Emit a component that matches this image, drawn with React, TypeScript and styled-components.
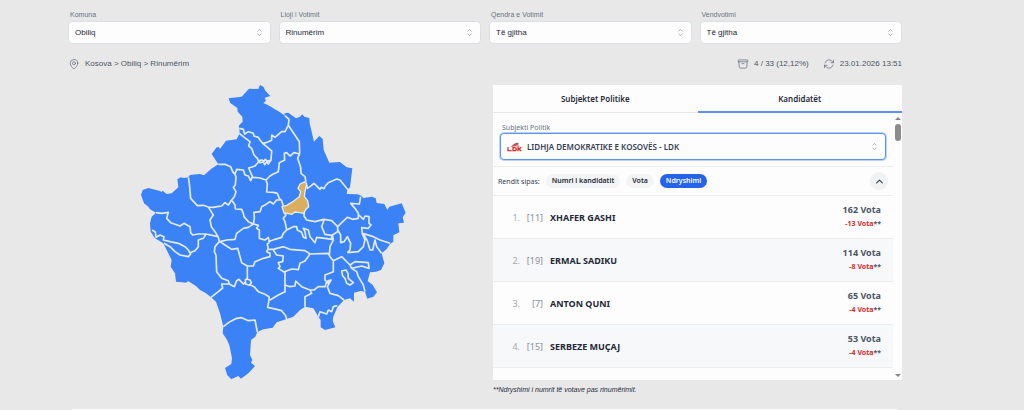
import React, { useState } from "react";
import styled, { createGlobalStyle } from "styled-components";
import {
  HiOutlineMapPin,
  HiOutlineArchiveBox,
  HiOutlineArrowPath,
  HiOutlineChevronUpDown,
  HiOutlineChevronUp,
} from "react-icons/hi2";

const GlobalStyle = createGlobalStyle`
  * { box-sizing: border-box; }
  body {
    margin: 0;
    background: #e8e8e8;
    color: #1f2937;
    font-family: "Liberation Sans", Arial, sans-serif;
    overflow-x: hidden;
  }
  button, select { font: inherit; color: inherit; }
`;

const Page = styled.main`
  padding: 10px 122px 0 68px;
`;

const Filters = styled.form`
  display: grid;
  grid-template-columns: repeat(4, 1fr);
  gap: 8px;
`;

const Field = styled.div`
  display: flex;
  flex-direction: column;
`;

const FieldLabel = styled.label`
  padding-left: 2px;
  font-size: 7px;
  line-height: 10px;
  color: #6b7280;
`;

const SelectBox = styled.div<{ $active?: boolean }>`
  display: flex;
  align-items: center;
  height: ${(p) => (p.$active ? 27 : 23)}px;
  margin-top: ${(p) => (p.$active ? 0 : 1)}px;
  padding: 0 5px 0 6px;
  background: #fdfdfd;
  border: 1px solid ${(p) => (p.$active ? "#5b93f0" : "#dcdfe3")};
  border-radius: 4px;
  box-shadow: ${(p) => (p.$active ? "0 0 0 1px #bcd3fa" : "none")};
  color: #8b929d;
`;

const Select = styled.select<{ $strong?: boolean }>`
  flex: 1;
  min-width: 0;
  padding: 0;
  border: 0;
  outline: 0;
  appearance: none;
  background: transparent;
  color: ${(p) => (p.$strong ? "#374151" : "#1f2937")};
  font-size: 8px;
  font-weight: ${(p) => (p.$strong ? 600 : 400)};
`;

const StatusBar = styled.div`
  display: flex;
  align-items: center;
  gap: 14px;
  height: 12px;
  margin: 14px 0 15px;
  font-size: 8px;
  line-height: 12px;
  color: #4b5563;
`;

const Status = styled.div<{ $grow?: boolean }>`
  display: flex;
  align-items: center;
  gap: 5px;
  flex: ${(p) => (p.$grow ? 1 : "none")};
  svg { color: #6b7280; }
`;

const Content = styled.div`
  display: grid;
  grid-template-columns: 1fr 409px;
  gap: 12px;
`;

const MapArea = styled.div`
  display: flex;
  justify-content: center;
  align-items: flex-start;
  margin-top: -5px;
`;

const Panel = styled.section`
  background: #fdfdfd;
  font-family: "Noto Sans", sans-serif;
`;

const Tabs = styled.div`
  display: grid;
  grid-template-columns: 1fr 1fr;
`;

const Tab = styled.button<{ $active: boolean }>`
  height: 28px;
  padding: 0;
  border: 0;
  border-bottom: ${(p) => (p.$active ? "2px solid #5b93f0" : "1px solid #e5e7eb")};
  background: transparent;
  font-size: 8px;
  font-weight: 600;
`;

const ScrollArea = styled.div`
  display: flex;
  height: 267px;
  overflow: hidden;
`;

const ScrollContent = styled.div`
  flex: 1;
  min-width: 0;
`;

const ScrollBar = styled.div`
  display: flex;
  flex-direction: column;
  align-items: center;
  gap: 4px;
  width: 9px;
  padding: 4px 0 3px;
`;

const Arrow = styled.span<{ $down?: boolean }>`
  border: 3px solid transparent;
  border-width: ${(p) => (p.$down ? "3px 3px 0" : "0 3px 3px")};
  border-${(p) => (p.$down ? "top" : "bottom")}-color: #858585;
  margin-top: ${(p) => (p.$down ? "auto" : "0")};
`;

const Thumb = styled.span`
  width: 6px;
  height: 17px;
  border-radius: 3px;
  background: #8b8b8b;
`;

const PartyField = styled(Field)`
  padding: 10px 7px 6px;
  border-bottom: 1px solid #eceef0;
`;

const PartyLogo = styled.svg`
  margin-right: 5px;
  flex: none;
`;

const SortRow = styled.div`
  display: flex;
  align-items: center;
  gap: 6px;
  height: 29px;
  padding: 0 5px;
  border-bottom: 1px solid #eceef0;
  font-size: 7px;
  color: #374151;
`;

const Chip = styled.button<{ $active: boolean }>`
  height: 14px;
  padding: 0 6px;
  border: 0;
  border-radius: 7px;
  background: ${(p) => (p.$active ? "#2563eb" : "#f3f4f6")};
  color: ${(p) => (p.$active ? "#ffffff" : "#1f2937")};
  font-weight: 600;
  line-height: 14px;
`;

const Collapse = styled.button`
  display: flex;
  align-items: center;
  justify-content: center;
  width: 18px;
  height: 18px;
  margin-left: auto;
  padding: 0;
  border: 0;
  border-radius: 50%;
  background: #f1f2f4;
`;

const List = styled.ol`
  margin: 0;
  padding: 0;
  list-style: none;
`;

const Candidate = styled.li`
  display: flex;
  align-items: center;
  height: 43px;
  padding: 0 12px 0 15px;
  border-bottom: 1px solid #eceef0;
  font-size: 9px;
  &:nth-child(even) { background: #f7f8fa; }
`;

const Rank = styled.span`
  width: 12px;
  text-align: right;
  color: #a3a8b0;
`;

const Num = styled.span`
  width: 23px;
  text-align: right;
  color: #8a8f98;
`;

const Name = styled.span`
  flex: 1;
  margin-left: 7px;
  font-weight: 700;
`;

const Votes = styled.div`
  text-align: right;
  font-weight: 700;
  line-height: 14px;
  color: #4b5563;
`;

const Change = styled.div`
  font-size: 7px;
  color: #4b5563;
  em { font-style: normal; color: #dc2626; }
`;

const Footnote = styled.p`
  margin: 5px 0 0;
  font-size: 7px;
  line-height: 10px;
  font-style: italic;
`;

const NextSection = styled.div`
  margin: 14px 4px 0;
  border-top: 1px solid #fafafa;
`;

const outline =
  "M266,55L305,50L327,26L355,27L360,15L370,20L376,32L391,48L374,53L378,62L370,69L385,76L420,97L435,107L433,100L445,98L468,115L480,110L487,103L493,110L508,114L509,130L522,185L530,176L538,168L548,177L551,210L568,248L600,246L620,262L637,265L630,322L622,330L620,342L652,343L664,347L670,354L696,350L707,355L710,369L733,372L742,390L748,380L785,370L797,398L788,412L792,428L775,430L778,457L760,466L760,485L750,492L740,507L725,520L733,550L723,570L708,575L690,577L683,603L698,615L711,637L700,650L682,656L675,635L662,633L642,638L642,665L630,655L612,660L592,682L580,710L578,723L586,742L575,745L555,750L542,742L542,720L535,710L520,685L495,680L480,690L460,710L440,717L410,727L398,743L370,748L352,756L346,770L333,780L330,825L337,840L333,848L345,858L325,880L303,896L295,888L274,898L262,886L255,864L274,852L276,835L268,795L260,778L248,760L250,740L240,700L228,665L213,652L196,638L180,630L168,618L150,607L145,603L138,608L125,607L108,605L105,580L92,560L95,540L80,510L70,490L45,475L32,455L30,430L35,410L48,398L30,388L25,380L12,370L3,345L8,330L25,324L60,333L64,336L68,332L80,342L95,340L115,322L112,298L122,292L133,294L145,292L150,285L180,282L192,286L214,266L235,253L215,222L230,202L236,201L240,207L258,182L290,178L299,160L298,145L296,137L308,125L307,110L293,95L292,84L270,68Z";

const borders = [
  "M298,145L310,148L314,162L325,155L340,160L342,168L355,172L360,180L368,190L378,188L395,181L395,165L405,172L425,155L435,155L445,136L447,118L435,107",
  "M445,136L478,185L479,220L473,235L482,262L483,280L495,290L498,305",
  "M479,222L462,218L450,228L440,218L433,220L434,240L418,248L415,275L400,282L390,288L378,300",
  "M298,160L310,170L330,185L326,198L335,205L342,225L352,235L356,245L345,258L326,264L333,280L338,292L360,294L378,300",
  "M368,190L380,200L395,213L393,240L385,252L380,246L374,254L370,246L360,248L356,242L366,240L372,244L376,238L382,244L393,240",
  "M235,253L255,253L272,260L278,275L285,283L290,268L310,270L315,285L325,288L332,302L337,290",
  "M285,283L288,290L286,315L280,322L288,335L283,350L275,360L265,375L255,368L245,378L232,380L220,382L205,381L190,376L172,377L152,355L148,310L145,292",
  "M378,300L382,312L380,336L400,337L412,340L418,355L425,362L430,378",
  "M422,360L410,360L400,372L390,365L375,375L365,380L360,395L342,397L343,415L340,432",
  "M275,360L285,375L286,387L305,388L310,400L312,410L325,425L340,432",
  "M205,381L215,397L220,405L210,420L214,440L225,455L235,472L238,485",
  "M48,398L65,400L85,397L80,415L92,428L120,438L132,430L150,440L152,458L158,465L175,462L198,462L220,467L235,470",
  "M198,462L190,475L175,480L175,500L165,512L150,518L145,510L135,500L115,490L90,485L70,480L72,470L60,465L48,472L46,456L36,450",
  "M72,490L90,500L105,515L120,525L145,530L152,522L145,510",
  "M340,432L325,442L310,445L290,460L285,478L260,480L240,485",
  "M340,432L355,436L350,445L358,450L358,475L375,480L385,472L388,488",
  "M385,485L405,478L425,472L430,460L440,450L435,425L430,415L438,405L432,398",
  "M440,450L460,440L470,440L472,450L485,457L490,472L498,475L495,455L490,445L505,450L510,470L525,488L530,472L555,475L575,478L575,466L555,463L545,440L552,420",
  "M493,395L492,408L500,420L525,425L552,418L575,422L593,440L605,428L622,412L638,418L655,415L655,400L645,385L632,370L658,372L662,350",
  "M657,405L670,418L675,408L687,410L687,430L693,435L685,445L665,443L667,462L675,480L670,500L655,515L622,518",
  "M670,462L682,482L690,510L698,510L705,480L710,500L725,520M668,460L700,470L720,480L750,490",
  "M593,440L593,455L577,465L580,480L570,500L568,528M593,450L602,465L602,488L612,485L622,470L632,490L630,510L622,518",
  "M388,488L382,492L385,508L400,508L430,500L450,508L495,512L510,522L565,520L570,530L580,542L605,530L630,555L645,545L685,548L687,565L665,558L635,565L630,555",
  "M400,510L410,525L430,528L428,545L415,548L420,560L415,565L432,576L455,567L475,569L480,550L495,543L510,522",
  "M435,575L435,635L415,645L390,660M435,615L450,620L465,618L467,603L485,620L510,630L515,640L495,650L495,680",
  "M510,630L522,630L535,620L555,620L560,605L570,600M580,542L580,575L555,585L555,600L565,610L573,600L562,620L570,640L595,647L612,660",
  "M635,565L650,575L655,590L670,615L675,635M605,573L618,570L624,580L625,595L640,608L630,615L620,610L615,595L608,588Z",
  "M535,710L540,695L560,702L565,690L575,695L580,680L592,677",
  "M213,652L235,635L248,624L245,612L268,612L283,620L290,602L297,598L310,612L318,605M322,596L322,558M316,600L320,597L330,600L334,608L328,616L317,612ZM330,614L342,620L355,635L375,643L387,650L387,660L383,682L410,688L425,692L437,707L440,717",
  "M238,485L225,500L223,515L228,525L230,575L245,595L265,602L268,612",
  "M240,485L255,495L275,508L293,505L300,530L305,548L322,558L340,558L345,545L370,535L390,530L390,520L380,515L385,505",
  "M250,740L270,725L290,715L305,713L325,722L345,720L352,756",
  "M500,315L502,325L510,320L522,310L540,328L544,322L552,326L556,318L565,308L590,297L600,300L620,325L626,330",
];

const highlighted =
  "M480,312L495,305L500,312L495,335L493,350L503,362L506,380L498,388L490,400L475,397L465,396L455,403L432,398L426,380L440,376L460,364L478,350L482,335L474,325Z";

const locationFilters = [
  { id: "komuna", label: "Komuna", value: "Obiliq" },
  { id: "lloji", label: "Lloji i Votimit", value: "Rinumërim" },
  { id: "qendra", label: "Qendra e Votimit", value: "Të gjitha" },
  { id: "vendvotimi", label: "Vendvotimi", value: "Të gjitha" },
];

const candidates = [
  { num: 11, name: "XHAFER GASHI", votes: 162, change: -13 },
  { num: 19, name: "ERMAL SADIKU", votes: 114, change: -8 },
  { num: 7, name: "ANTON QUNI", votes: 65, change: -4 },
  { num: 15, name: "SERBEZE MUÇAJ", votes: 53, change: -4 },
];

function KosovoMap() {
  return (
    <svg width="270" height="300" viewBox="0 0 810 900" role="img" aria-label="Kosova">
      <path d={outline} fill="#3b82f6" />
      <path d={borders.join("")} fill="none" stroke="#e3ebf8" strokeWidth="5" strokeLinejoin="round" />
      <path d={highlighted} fill="#d9ae5f" stroke="#e3ebf8" strokeWidth="4" strokeLinejoin="round" />
    </svg>
  );
}

export default function App() {
  const [tab, setTab] = useState("Kandidatët");
  const [sort, setSort] = useState("Ndryshimi");
  return (
    <>
      <GlobalStyle />
      <Page>
        <Filters>
          {locationFilters.map((f) => (
            <Field key={f.id}>
              <FieldLabel htmlFor={f.id}>{f.label}</FieldLabel>
              <SelectBox>
                <Select id={f.id}>
                  <option>{f.value}</option>
                </Select>
                <HiOutlineChevronUpDown size={11} />
              </SelectBox>
            </Field>
          ))}
        </Filters>
        <StatusBar>
          <Status $grow>
            <HiOutlineMapPin size={12} />
            Kosova &gt; Obiliq &gt; Rinumërim
          </Status>
          <Status>
            <HiOutlineArchiveBox size={12} />4 / 33 (12,12%)
          </Status>
          <Status>
            <HiOutlineArrowPath size={12} />
            23.01.2026 13:51
          </Status>
        </StatusBar>
        <Content>
          <MapArea>
            <KosovoMap />
          </MapArea>
          <div>
            <Panel>
              <Tabs role="tablist">
                {["Subjektet Politike", "Kandidatët"].map((t) => (
                  <Tab key={t} role="tab" aria-selected={tab === t} $active={tab === t} onClick={() => setTab(t)}>
                    {t}
                  </Tab>
                ))}
              </Tabs>
              <ScrollArea>
                <ScrollContent>
                  <PartyField>
                    <FieldLabel htmlFor="subjekti">Subjekti Politik</FieldLabel>
                    <SelectBox $active>
                      <PartyLogo width="15" height="10" viewBox="0 0 45 30" aria-hidden="true">
                        <path d="M14 10C20 8 22 3 30 2L37 4L32 6L36 8L28 9L24 12Z" fill="#8b6468" />
                        <path d="M12 12Q25 8 38 12L36 14Q25 11 14 14Z" fill="#dc3b35" />
                        <path
                          d="M3 16V26H14M18 17V26H22Q28 26 28 21Q28 17 22 17ZM33 15V28M43 16L35 21L43 27"
                          fill="none"
                          stroke="#dc2f2a"
                          strokeWidth="4"
                        />
                      </PartyLogo>
                      <Select id="subjekti" $strong>
                        <option>LIDHJA DEMOKRATIKE E KOSOVËS - LDK</option>
                      </Select>
                      <HiOutlineChevronUpDown size={11} />
                    </SelectBox>
                  </PartyField>
                  <SortRow>
                    Rendit sipas:
                    {["Numri i kandidatit", "Vota", "Ndryshimi"].map((s) => (
                      <Chip key={s} $active={sort === s} onClick={() => setSort(s)}>
                        {s}
                      </Chip>
                    ))}
                    <Collapse aria-label="Mbyll">
                      <HiOutlineChevronUp size={9} strokeWidth={3} />
                    </Collapse>
                  </SortRow>
                  <List>
                    {candidates.map((c, i) => (
                      <Candidate key={c.num}>
                        <Rank>{i + 1}.</Rank>
                        <Num>[{c.num}]</Num>
                        <Name>{c.name}</Name>
                        <Votes>
                          {c.votes} Vota
                          <Change>
                            <em>{c.change} Vota</em>**
                          </Change>
                        </Votes>
                      </Candidate>
                    ))}
                  </List>
                </ScrollContent>
                <ScrollBar aria-hidden="true">
                  <Arrow />
                  <Thumb />
                  <Arrow $down />
                </ScrollBar>
              </ScrollArea>
            </Panel>
            <Footnote>**Ndryshimi i numrit të votave pas rinumërimit.</Footnote>
          </div>
        </Content>
        <NextSection />
      </Page>
    </>
  );
}
